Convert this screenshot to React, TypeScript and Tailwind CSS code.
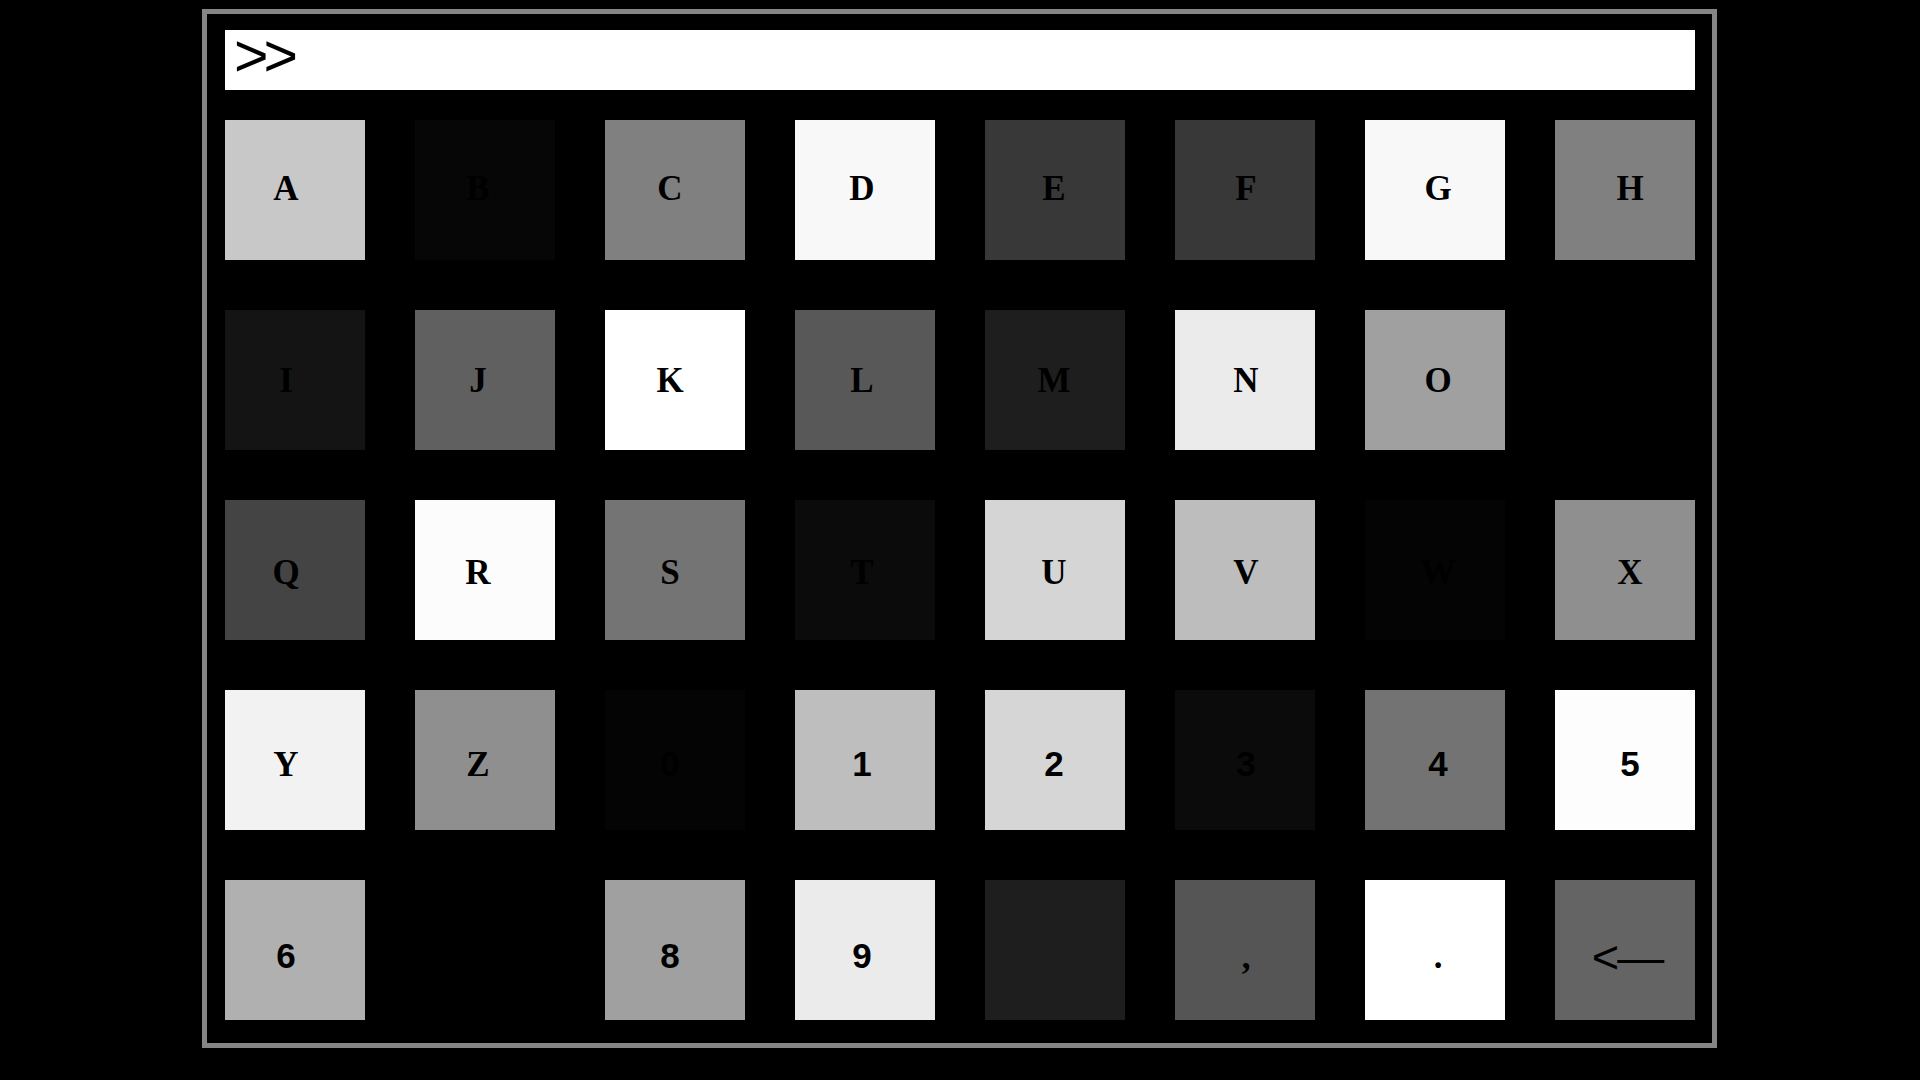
import React from 'react';

type Key = { label: string; bg: string; kind?: 'letter' | 'digit' | 'back' };

// rows of the on-screen keypad, shades as in the capture
const keys: Key[] = [
  { label: 'A', bg: 'bg-[#c8c8c8]' },
  { label: 'B', bg: 'bg-[#060606]' },
  { label: 'C', bg: 'bg-[#808080]' },
  { label: 'D', bg: 'bg-[#f8f8f8]' },
  { label: 'E', bg: 'bg-[#383838]' },
  { label: 'F', bg: 'bg-[#383838]' },
  { label: 'G', bg: 'bg-[#f8f8f8]' },
  { label: 'H', bg: 'bg-[#808080]' },

  { label: 'I', bg: 'bg-[#141414]' },
  { label: 'J', bg: 'bg-[#606060]' },
  { label: 'K', bg: 'bg-[#ffffff]' },
  { label: 'L', bg: 'bg-[#585858]' },
  { label: 'M', bg: 'bg-[#1e1e1e]' },
  { label: 'N', bg: 'bg-[#ebebeb]' },
  { label: 'O', bg: 'bg-[#a0a0a0]' },
  { label: 'P', bg: 'bg-[#000000]' },

  { label: 'Q', bg: 'bg-[#444444]' },
  { label: 'R', bg: 'bg-[#fcfcfc]' },
  { label: 'S', bg: 'bg-[#747474]' },
  { label: 'T', bg: 'bg-[#0b0b0b]' },
  { label: 'U', bg: 'bg-[#d5d5d5]' },
  { label: 'V', bg: 'bg-[#bdbdbd]' },
  { label: 'W', bg: 'bg-[#040404]' },
  { label: 'X', bg: 'bg-[#8f8f8f]' },

  { label: 'Y', bg: 'bg-[#f2f2f2]' },
  { label: 'Z', bg: 'bg-[#8f8f8f]' },
  { label: '0', bg: 'bg-[#040404]', kind: 'digit' },
  { label: '1', bg: 'bg-[#bebebe]', kind: 'digit' },
  { label: '2', bg: 'bg-[#d6d6d6]', kind: 'digit' },
  { label: '3', bg: 'bg-[#0b0b0b]', kind: 'digit' },
  { label: '4', bg: 'bg-[#737373]', kind: 'digit' },
  { label: '5', bg: 'bg-[#fdfdfd]', kind: 'digit' },

  { label: '6', bg: 'bg-[#b0b0b0]', kind: 'digit' },
  { label: '7', bg: 'bg-[#000000]', kind: 'digit' },
  { label: '8', bg: 'bg-[#a0a0a0]', kind: 'digit' },
  { label: '9', bg: 'bg-[#ebebeb]', kind: 'digit' },
  { label: '', bg: 'bg-[#1e1e1e]' },
  { label: ',', bg: 'bg-[#555555]' },
  { label: '.', bg: 'bg-[#ffffff]' },
  { label: '<—', bg: 'bg-[#646464]', kind: 'back' },
];

const fontFor = (kind?: Key['kind']) => {
  if (kind === 'digit') return "font-['Liberation_Sans',sans-serif] font-bold text-[35px] -mt-[2px]";
  if (kind === 'back') return "font-['Liberation_Sans',sans-serif] text-[47px] tracking-[-2px] -ml-[6px]";
  return "font-['Liberation_Serif',serif] font-bold text-[35px]";
};

const App: React.FC = () => {
  return (
    <div className="min-h-screen bg-black pt-[9px]">
      <div className="ml-[202px] w-[1515px] border-[5px] border-[#858585] pl-[18px] pr-[17px] pt-[16px] pb-[23px]">
        <div className="flex h-[60px] items-center bg-white pl-[9px] font-['Liberation_Sans',sans-serif] text-[59px] leading-none tracking-[-5px] text-black">
          <span className="-translate-y-[4px]">&gt;&gt;</span>
        </div>

        <div className="mt-[30px] grid grid-cols-[repeat(8,140px)] gap-[50px]">
          {keys.map((k, i) => {
            const col = i % 8;
            const row = Math.floor(i / 8);
            // labels sit on a slightly wider pitch than the keys
            const dx = -9 + 2 * col;
            const dy = -2.5 + 2 * row;
            return (
              <div
                key={i}
                className={`flex h-[140px] w-[140px] items-center justify-center ${k.bg}`}
              >
                <span
                  className={`leading-none text-black ${fontFor(k.kind)}`}
                  style={{ transform: `translate(${dx}px, ${dy}px)` }}
                >
                  {k.label}
                </span>
              </div>
            );
          })}
        </div>
      </div>
    </div>
  );
};

export default App;
